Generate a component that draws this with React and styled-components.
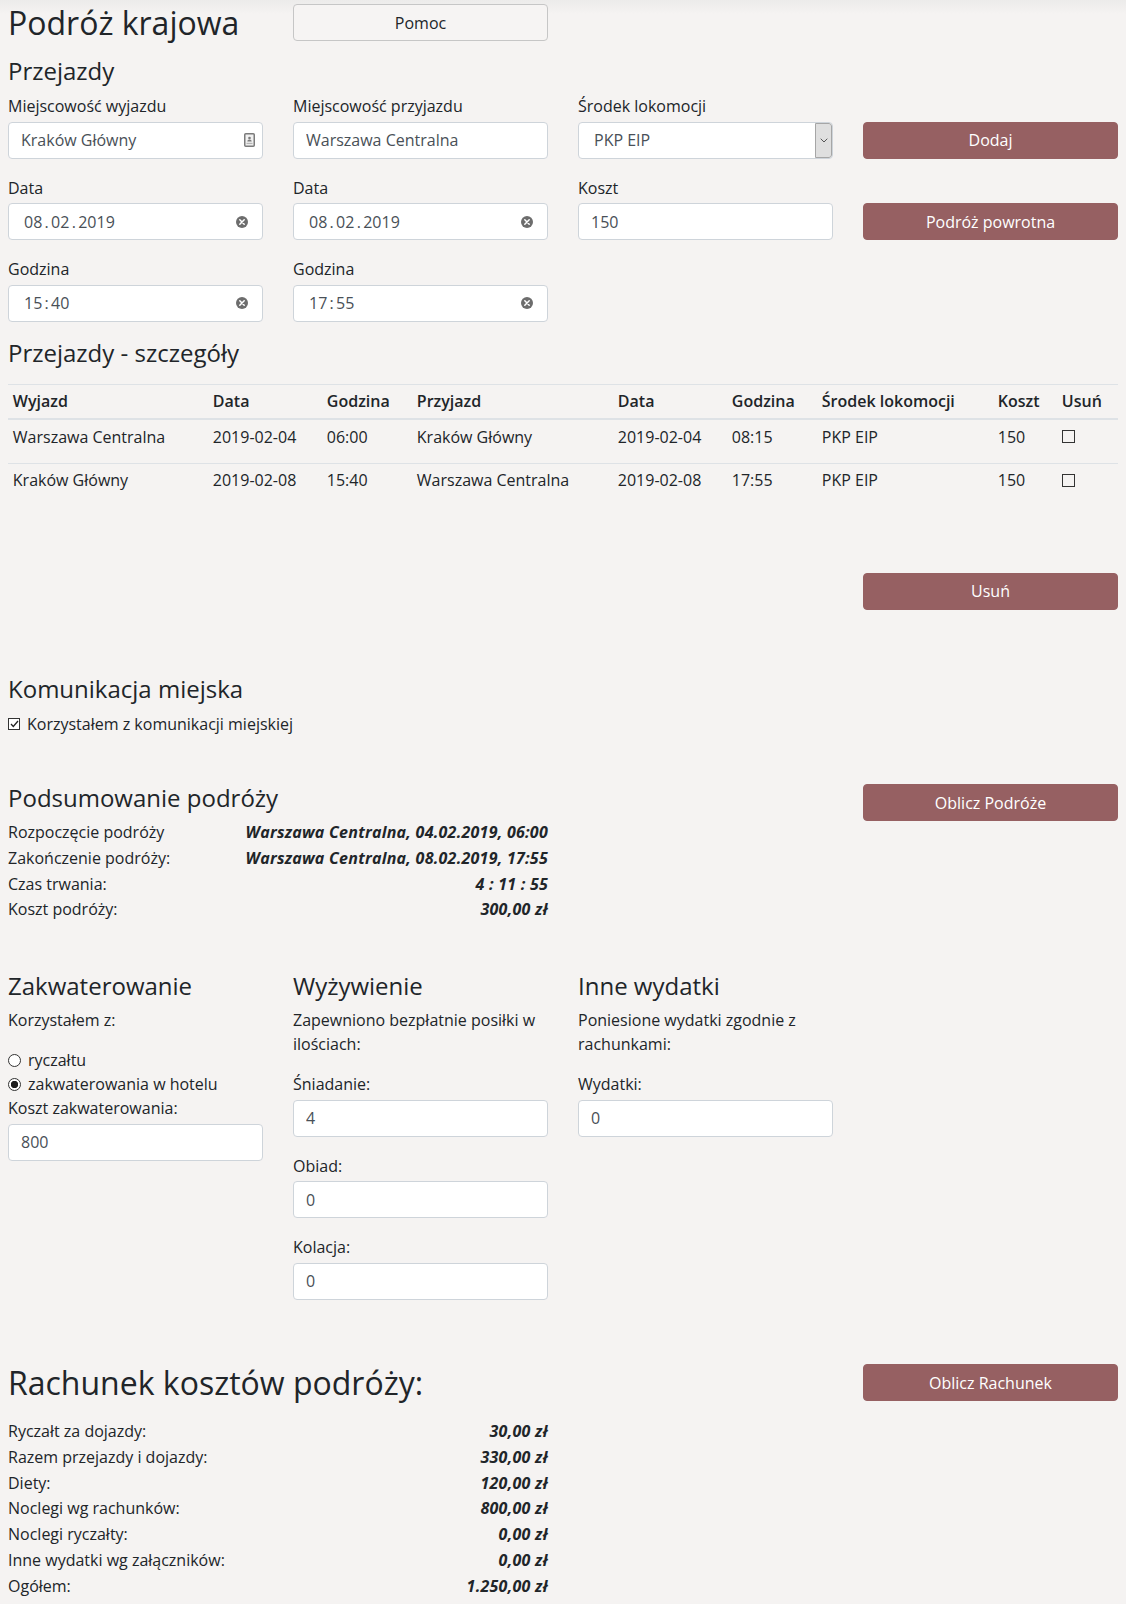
import React from 'react';
import styled, { createGlobalStyle } from 'styled-components';

const GlobalStyle = createGlobalStyle`
  * { box-sizing: border-box; }
  html, body { margin: 0; padding: 0; }
  body {
    background: linear-gradient(#ecebea 0, #f5f3f2 14px) no-repeat, #f5f3f2;
    font-family: "Open Sans", "Noto Sans", sans-serif;
    font-size: 16px;
    line-height: 1.5;
    color: #212529;
  }
`;

const Page = styled.div`
  padding: 4px 8px 6px;
`;

const Grid = styled.div`
  display: grid;
  grid-template-columns: repeat(4, 1fr);
  column-gap: 30px;
  align-items: start;
  margin-top: ${p => p.$top || 0}px;
`;

const Cell = styled.div`
  grid-column: ${p => (p.$at ? `${p.$at} / span ${p.$cols || 1}` : `span ${p.$cols || 1}`)};
  padding-top: ${p => p.$pad || 0}px;
`;

const Heading = styled.h2`
  margin: ${p => p.$mt || 0}px 0 ${p => (p.$mb === undefined ? 8 : p.$mb)}px;
  font-size: ${p => p.$size || 24}px;
  font-weight: 400;
  line-height: 1.2;
`;

const Field = styled.div`
  margin-bottom: 17px;
`;

const Label = styled.label`
  display: block;
  margin-bottom: 3.5px;
  line-height: 24px;
`;

const InputWrap = styled.div`
  display: flex;
  align-items: center;
  height: 37px;
  padding: 0 ${p => p.$right || 12}px 0 ${p => p.$left || 12}px;
  background: #fff;
  border: 1px solid #ced4da;
  border-radius: 4px;
  color: #495057;
`;

const TextInput = styled.input`
  flex: 1;
  min-width: 0;
  border: 0;
  padding: 0;
  background: transparent;
  font: inherit;
  color: inherit;
  outline: none;
`;

const Stamp = styled.span`
  flex: 1;
  line-height: 24px;
  white-space: nowrap;
`;

const Sep = styled.span`
  margin: 0 2.3px;
`;

const SelectWrap = styled.div`
  display: flex;
  align-items: stretch;
  height: 37px;
  background: #fff;
  border: 1px solid #ced4da;
  border-radius: 4px;
  color: #495057;
  overflow: hidden;
`;

const SelectValue = styled.span`
  flex: 1;
  padding-left: 15px;
  line-height: 35px;
`;

const DropBtn = styled.span`
  width: 17px;
  display: flex;
  align-items: center;
  justify-content: center;
  background: #dfdfdf;
  border: 1px solid #a6a6a6;
  border-radius: 0 3px 3px 0;
`;

const Button = styled.button`
  display: block;
  width: 100%;
  height: 37px;
  padding: 0 12px;
  border-radius: 4px;
  font: inherit;
  line-height: 24px;
  cursor: pointer;
  background: ${p => (p.$light ? '#f6f4f3' : '#966062')};
  color: ${p => (p.$light ? '#212529' : '#fff')};
  border: 1px solid ${p => (p.$light ? '#c6c6c6' : '#966062')};
`;

const Table = styled.table`
  width: 100%;
  border-collapse: collapse;
  table-layout: fixed;
`;

const Col = styled.col`
  width: ${p => p.$w}px;
`;

const Th = styled.th`
  text-align: left;
  font-weight: 600;
  padding: 4.8px;
  line-height: 24px;
  border-top: 1px solid #dee2e6;
  border-bottom: 2px solid #dee2e6;
  white-space: nowrap;
`;

const Td = styled.td`
  padding: 4.8px 4.8px 13.6px;
  line-height: 24px;
  border-top: 1px solid #dee2e6;
  vertical-align: top;
  white-space: nowrap;
`;

const Box = styled.span`
  display: inline-flex;
  align-items: center;
  justify-content: center;
  width: ${p => p.$size || 13}px;
  height: ${p => p.$size || 13}px;
  border: 1px solid #333;
  background: ${p => (p.$fill ? '#fff' : 'transparent')};
  vertical-align: top;
  margin-top: ${p => (p.$fill ? 0 : 5.5)}px;
  flex: none;
`;

const Radio = styled.span`
  display: inline-block;
  width: 13px;
  height: 13px;
  border-radius: 50%;
  border: 1px solid #333;
  background: ${p =>
    p.$on ? 'radial-gradient(circle, #1e1e1e 0 3.4px, #fff 4px)' : '#fff'};
  flex: none;
`;

const Choice = styled.div`
  display: flex;
  align-items: center;
  gap: 7px;
  line-height: 24px;
`;

const Text = styled.p`
  margin: 0 0 ${p => (p.$mb === undefined ? 16 : p.$mb)}px;
  line-height: 24px;
`;

const Summary = styled.dl`
  display: grid;
  grid-template-columns: 1fr auto;
  margin: 0;
`;

const Term = styled.dt`
  line-height: 25.8px;
`;

const Amount = styled.dd`
  margin: 0;
  text-align: right;
  font-weight: 700;
  font-style: italic;
  letter-spacing: 0.25px;
  line-height: 25.8px;
  white-space: nowrap;
`;

const ClearIcon = () => (
  <svg width="12" height="12" viewBox="0 0 12 12" style={{ flex: 'none' }}>
    <circle cx="6" cy="6" r="6" fill="#6d6d6d" />
    <path d="M3.8 3.8l4.4 4.4M8.2 3.8l-4.4 4.4" stroke="#fff" strokeWidth="1.5" strokeLinecap="round" />
  </svg>
);

const CardIcon = () => (
  <svg width="11" height="14" viewBox="0 0 11 14" style={{ flex: 'none' }}>
    <rect x="0.75" y="0.75" width="9.5" height="12.5" rx="1" fill="#f1f1f1" stroke="#7b7b7b" strokeWidth="1.5" />
    <circle cx="5.5" cy="5" r="1.3" fill="#7b7b7b" />
    <path d="M3.3 8.6c0-1.4 1-2.1 2.2-2.1s2.2 0.7 2.2 2.1z" fill="#7b7b7b" />
    <rect x="2.5" y="9.8" width="6" height="1.3" fill="#b5b5b5" />
  </svg>
);

const Chevron = () => (
  <svg width="8" height="5" viewBox="0 0 8 5">
    <path d="M0.7 0.7L4 4l3.3-3.3" fill="none" stroke="#555" strokeWidth="1" />
  </svg>
);

const CheckIcon = () => (
  <svg width="9" height="8" viewBox="0 0 9 8">
    <path d="M1 4l2.3 2.5L8 1" fill="none" stroke="#222" strokeWidth="1.3" />
  </svg>
);

const DateField = ({ label, parts, sep }) => (
  <Field>
    <Label>{label}</Label>
    <InputWrap $left={15} $right={14}>
      <Stamp>
        {parts.map((p, i) => (
          <React.Fragment key={i}>
            {i > 0 && <Sep>{sep}</Sep>}
            {p}
          </React.Fragment>
        ))}
      </Stamp>
      <ClearIcon />
    </InputWrap>
  </Field>
);

const TextField = ({ label, value, icon }) => (
  <Field>
    <Label>{label}</Label>
    <InputWrap $right={icon ? 7.5 : 12}>
      <TextInput defaultValue={value} />
      {icon}
    </InputWrap>
  </Field>
);

const cols = [200, 114, 90, 201, 114, 90, 176, 64, 61];
const heads = ['Wyjazd', 'Data', 'Godzina', 'Przyjazd', 'Data', 'Godzina', 'Środek lokomocji', 'Koszt', 'Usuń'];
const trips = [
  ['Warszawa Centralna', '2019-02-04', '06:00', 'Kraków Główny', '2019-02-04', '08:15', 'PKP EIP', '150'],
  ['Kraków Główny', '2019-02-08', '15:40', 'Warszawa Centralna', '2019-02-08', '17:55', 'PKP EIP', '150'],
];

const summary = [
  ['Rozpoczęcie podróży', 'Warszawa Centralna, 04.02.2019, 06:00'],
  ['Zakończenie podróży:', 'Warszawa Centralna, 08.02.2019, 17:55'],
  ['Czas trwania:', '4 : 11 : 55'],
  ['Koszt podróży:', '300,00 zł'],
];

const bill = [
  ['Ryczałt za dojazdy:', '30,00 zł'],
  ['Razem przejazdy i dojazdy:', '330,00 zł'],
  ['Diety:', '120,00 zł'],
  ['Noclegi wg rachunków:', '800,00 zł'],
  ['Noclegi ryczałty:', '0,00 zł'],
  ['Inne wydatki wg załączników:', '0,00 zł'],
  ['Ogółem:', '1.250,00 zł'],
];

export default function App() {
  return (
    <Page>
      <GlobalStyle />
      <Grid>
        <Cell>
          <Heading as="h1" $size={32} $mb={0}>Podróż krajowa</Heading>
        </Cell>
        <Cell>
          <Button $light>Pomoc</Button>
        </Cell>
      </Grid>

      <Heading as="h3" $mt={14.6} $mb={8.5}>Przejazdy</Heading>
      <Grid>
        <Cell>
          <TextField label="Miejscowość wyjazdu" value="Kraków Główny" icon={<CardIcon />} />
        </Cell>
        <Cell>
          <TextField label="Miejscowość przyjazdu" value="Warszawa Centralna" />
        </Cell>
        <Cell>
          <Field>
            <Label>Środek lokomocji</Label>
            <SelectWrap>
              <SelectValue>PKP EIP</SelectValue>
              <DropBtn>
                <Chevron />
              </DropBtn>
            </SelectWrap>
          </Field>
        </Cell>
        <Cell $pad={27.5}>
          <Button>Dodaj</Button>
        </Cell>

        <Cell>
          <DateField label="Data" parts={['08', '02', '2019']} sep="." />
        </Cell>
        <Cell>
          <DateField label="Data" parts={['08', '02', '2019']} sep="." />
        </Cell>
        <Cell>
          <TextField label="Koszt" value="150" />
        </Cell>
        <Cell $pad={27.5}>
          <Button>Podróż powrotna</Button>
        </Cell>

        <Cell>
          <DateField label="Godzina" parts={['15', '40']} sep=":" />
        </Cell>
        <Cell>
          <DateField label="Godzina" parts={['17', '55']} sep=":" />
        </Cell>
      </Grid>

      <Heading as="h3" $mb={16}>Przejazdy - szczegóły</Heading>
      <Table>
        <colgroup>
          {cols.map((w, i) => (
            <Col key={i} $w={w} />
          ))}
        </colgroup>
        <thead>
          <tr>
            {heads.map((h, i) => (
              <Th key={i}>{h}</Th>
            ))}
          </tr>
        </thead>
        <tbody>
          {trips.map((row, r) => (
            <tr key={r}>
              {row.map((c, i) => (
                <Td key={i}>{c}</Td>
              ))}
              <Td>
                <Box />
              </Td>
            </tr>
          ))}
        </tbody>
      </Table>

      <Grid $top={66.6}>
        <Cell $at={4}>
          <Button>Usuń</Button>
        </Cell>
      </Grid>

      <Heading as="h3" $mt={65.3}>Komunikacja miejska</Heading>
      <Choice>
        <Box $size={12} $fill>
          <CheckIcon />
        </Box>
        Korzystałem z komunikacji miejskiej
      </Choice>

      <Grid $top={48.6}>
        <Cell $cols={2}>
          <Heading as="h3" $mb={7}>Podsumowanie podróży</Heading>
          <Summary>
            {summary.map(([k, v]) => (
              <React.Fragment key={k}>
                <Term>{k}</Term>
                <Amount>{v}</Amount>
              </React.Fragment>
            ))}
          </Summary>
        </Cell>
        <Cell $at={4}>
          <Button>Oblicz Podróże</Button>
        </Cell>
      </Grid>

      <Grid $top={48.3}>
        <Cell>
          <Heading as="h3">Zakwaterowanie</Heading>
          <Text>Korzystałem z:</Text>
          <Choice>
            <Radio />
            ryczałtu
          </Choice>
          <Choice>
            <Radio $on />
            zakwaterowania w hotelu
          </Choice>
          <TextField label="Koszt zakwaterowania:" value="800" />
        </Cell>
        <Cell>
          <Heading as="h3">Wyżywienie</Heading>
          <Text>Zapewniono bezpłatnie posiłki w ilościach:</Text>
          <TextField label="Śniadanie:" value="4" />
          <TextField label="Obiad:" value="0" />
          <TextField label="Kolacja:" value="0" />
        </Cell>
        <Cell>
          <Heading as="h3">Inne wydatki</Heading>
          <Text>Poniesione wydatki zgodnie z rachunkami:</Text>
          <TextField label="Wydatki:" value="0" />
        </Cell>
      </Grid>

      <Grid $top={47.4}>
        <Cell $cols={2}>
          <Heading as="h2" $size={32} $mb={16.5}>Rachunek kosztów podróży:</Heading>
          <Summary>
            {bill.map(([k, v]) => (
              <React.Fragment key={k}>
                <Term>{k}</Term>
                <Amount>{v}</Amount>
              </React.Fragment>
            ))}
          </Summary>
        </Cell>
        <Cell $at={4}>
          <Button>Oblicz Rachunek</Button>
        </Cell>
      </Grid>
    </Page>
  );
}
